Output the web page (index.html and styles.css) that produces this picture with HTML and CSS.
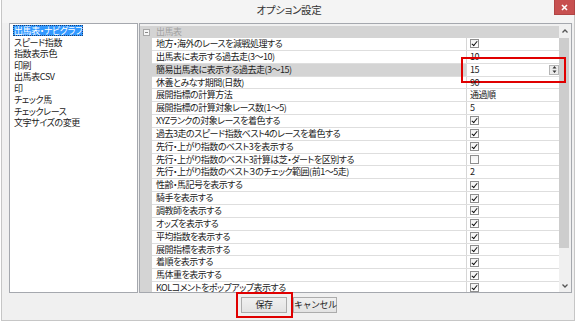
FILE: index.html
```html
<!DOCTYPE html>
<html lang="ja">
<head>
<meta charset="utf-8">
<title>オプション設定</title>
<link rel="stylesheet" href="styles.css">
</head>
<body>
<div class="window">
  <div class="titlebar">
    <span class="title">オプション設定</span>
    <button class="close" aria-label="閉じる">
      <svg width="7" height="7" viewBox="0 0 7 7"><path d="M1 1 L6 6 M6 1 L1 6" stroke="#fff" stroke-width="1.6" fill="none"/></svg>
    </button>
  </div>
  <div class="main">
    <ul class="list">
      <li><span class="sel">出馬表・ナビグラフ</span></li>
      <li>スピード指数</li>
      <li>指数表示色</li>
      <li>印刷</li>
      <li>出馬表CSV</li>
      <li>印</li>
      <li>チェック馬</li>
      <li>チェックレース</li>
      <li>文字サイズの変更</li>
    </ul>
    <div class="panel">
      <div class="tree">
        <div class="group">
          <span class="toggle"></span><span class="group-name">出馬表</span>
        </div>
        <div class="rows">
          <div class="row"><div class="label">地方・海外のレースを減戦処理する</div><div class="value"><span class="cb on"></span></div></div>
          <div class="row"><div class="label">出馬表に表示する過去走(3〜10)</div><div class="value">10</div></div>
          <div class="row selected"><div class="label">簡易出馬表に表示する過去走(3〜15)</div><div class="value edit">15<span class="spin"><svg width="7" height="9" viewBox="0 0 7 9"><path d="M3.5 1 L5.5 3.5 L1.5 3.5 Z M1.5 5.5 L5.5 5.5 L3.5 8 Z" fill="#333"/></svg></span><span class="mark mark-input"></span></div></div>
          <div class="row"><div class="label">休養とみなす期間(日数)</div><div class="value">90</div></div>
          <div class="row"><div class="label">展開指標の計算方法</div><div class="value">通過順</div></div>
          <div class="row"><div class="label">展開指標の計算対象レース数(1〜5)</div><div class="value">5</div></div>
          <div class="row"><div class="label">XYZランクの対象レースを着色する</div><div class="value"><span class="cb on"></span></div></div>
          <div class="row"><div class="label">過去3走のスピード指数ベスト4のレースを着色する</div><div class="value"><span class="cb on"></span></div></div>
          <div class="row"><div class="label">先行・上がり指数のベスト3を表示する</div><div class="value"><span class="cb on"></span></div></div>
          <div class="row"><div class="label">先行・上がり指数のベスト3計算は芝・ダートを区別する</div><div class="value"><span class="cb"></span></div></div>
          <div class="row"><div class="label">先行・上がり指数のベスト３のチェック範囲(前1〜5走)</div><div class="value">2</div></div>
          <div class="row"><div class="label">性齢・馬記号を表示する</div><div class="value"><span class="cb on"></span></div></div>
          <div class="row"><div class="label">騎手を表示する</div><div class="value"><span class="cb on"></span></div></div>
          <div class="row"><div class="label">調教師を表示する</div><div class="value"><span class="cb on"></span></div></div>
          <div class="row"><div class="label">オッズを表示する</div><div class="value"><span class="cb on"></span></div></div>
          <div class="row"><div class="label">平均指数を表示する</div><div class="value"><span class="cb on"></span></div></div>
          <div class="row"><div class="label">展開指標を表示する</div><div class="value"><span class="cb on"></span></div></div>
          <div class="row"><div class="label">着順を表示する</div><div class="value"><span class="cb on"></span></div></div>
          <div class="row"><div class="label">馬体重を表示する</div><div class="value"><span class="cb on"></span></div></div>
          <div class="row"><div class="label">KOLコメントをポップアップ表示する</div><div class="value"><span class="cb on"></span></div></div>
        </div>
      </div>
      <div class="scrollbar">
        <div class="sb-btn"><svg width="6" height="4" viewBox="0 0 6 4"><path d="M0.5 3.5 L3 1 L5.5 3.5" stroke="#555" stroke-width="1.3" fill="none"/></svg></div>
        <div class="sb-track"><div class="sb-thumb"></div></div>
        <div class="sb-btn"><svg width="6" height="4" viewBox="0 0 6 4"><path d="M0.5 0.5 L3 3 L5.5 0.5" stroke="#555" stroke-width="1.3" fill="none"/></svg></div>
      </div>
    </div>
  </div>
  <div class="footer">
    <button class="btn save">保存<span class="mark mark-btn"></span></button>
    <button class="btn cancel">キャンセル</button>
  </div>
</div>
</body>
</html>
```
FILE: styles.css
```css
* { box-sizing: border-box; }
html, body { margin: 0; padding: 0; background: #ffffff; }
body {
  font-family: "Noto Sans CJK JP", "Noto Sans", sans-serif;
  font-feature-settings: "palt";
  color: #222;
  width: 580px;
  height: 322px;
  overflow: hidden;
}
.window {
  margin-left: 1px;
  width: 574px;
  height: 321px;
  border: 1px solid #c6c6c6;
  border-top: none;
  background: #f0f0f0;
  display: flex;
  flex-direction: column;
}
.titlebar {
  height: 23px;
  flex: none;
  display: flex;
  align-items: flex-start;
  justify-content: center;
  position: relative;
  background: #f4f4f4;
}
.title {
  font-size: 10.5px;
  line-height: 20px;
  letter-spacing: -0.3px;
  color: #333;
  margin-left: 2px;
}
.close {
  position: absolute;
  right: -1px;
  top: 0;
  width: 21px;
  height: 15px;
  border: 1px solid #b04444;
  border-top: none;
  background: #c75050;
  padding: 0;
  display: flex;
  align-items: center;
  justify-content: center;
}
.main {
  display: flex;
  gap: 1px;
  padding: 0 2px 0 7px;
  height: 270px;
  flex: none;
}
.list {
  margin: 0;
  padding: 1px 0 0 1px;
  list-style: none;
  width: 129px;
  height: 270px;
  background: #fff;
  border: 1px solid #a5a8ae;
  font-size: 9px;
  letter-spacing: -0.4px;
}
.list li {
  height: 11.55px;
  line-height: 11.55px;
  padding-left: 3px;
  white-space: nowrap;
}
.list .sel {
  display: inline-block;
  margin-left: -1px;
  padding: 0 1px;
  background: #3399ff;
  color: #fff;
  outline: 1px dotted #1b3f73;
  outline-offset: -1px;
  line-height: 11px;
}
.panel {
  width: 433px;
  height: 270px;
  border: 1px solid #a5a8ae;
  background: #f0f0f0;
  display: flex;
  overflow: hidden;
}
.tree {
  width: 419px;
  flex: none;
  padding-top: 2px;
  background: #f0f0f0;
  font-size: 9px;
  letter-spacing: -0.5px;
}
.group {
  height: 12px;
  background: #d4d4d4;
  display: flex;
  align-items: center;
}
.toggle {
  width: 7px;
  height: 7px;
  margin-left: 3px;
  border: 1px solid #a7a7a7;
  background: #f6f6f6;
  position: relative;
}
.toggle::after {
  content: "";
  position: absolute;
  left: 1px;
  top: 2px;
  width: 3px;
  height: 1px;
  background: #8a8a8a;
}
.group-name {
  margin-left: 6px;
  color: #a2a2a2;
  line-height: 12px;
}
.rows {
  background: #d4d4d4;
  padding-left: 12px;
  height: 260px;
}
.row {
  height: 12.85px;
  display: grid;
  grid-template-columns: 1fr 92px;
  border-bottom: 1px solid #dedede;
  background: #fff;
  line-height: 11.85px;
}
.label {
  padding-left: 4px;
  border-right: 1px solid #d6d6d6;
  white-space: nowrap;
  overflow: hidden;
}
.row.selected .label { background: #d4d4d4; }
.value {
  padding-left: 3px;
  position: relative;
  display: flex;
  align-items: center;
  white-space: nowrap;
}
.value.edit { background: #fff; }
.spin {
  position: absolute;
  right: 0;
  top: 1px;
  width: 10px;
  height: 10px;
  border: 1px solid #b5b5b5;
  background: #ececec;
  display: flex;
  align-items: center;
  justify-content: center;
}
.cb {
  width: 9px;
  height: 9px;
  border: 1px solid #8e8e8e;
  background: linear-gradient(#f2f2f2, #ffffff);
  position: relative;
}
.cb.on::after {
  content: "";
  position: absolute;
  left: 2.2px;
  top: 0px;
  width: 2.4px;
  height: 5px;
  border-right: 1.7px solid #111;
  border-bottom: 1.7px solid #111;
  transform: rotate(40deg);
}
.scrollbar {
  width: 12px;
  flex: none;
  display: flex;
  flex-direction: column;
  background: #f0f0f0;
}
.sb-btn {
  height: 13px;
  flex: none;
  display: flex;
  align-items: center;
  justify-content: center;
  padding-right: 1px;
}
.sb-track { flex: 1; padding-top: 1px; }
.sb-thumb {
  width: 10px;
  height: 210px;
  background: #cdcdcd;
}
.footer {
  flex: 1;
  display: flex;
  justify-content: center;
  align-items: flex-start;
  gap: 6px;
  padding-top: 4px;
  padding-left: 2px;
}
.btn {
  height: 16px;
  padding: 0;
  border: 1px solid #acacac;
  background: linear-gradient(#f0f0f0, #e3e3e3);
  font-family: inherit;
  font-size: 9px;
  letter-spacing: -0.5px;
  color: #222;
  line-height: 14px;
  white-space: nowrap;
  position: relative;
}
.save { width: 46px; }
.cancel { width: 44px; }
.mark {
  position: absolute;
  border: 2px solid #e00000;
  pointer-events: none;
}
.mark-input { left: -6px; top: -7px; right: -7px; bottom: -7px; }
.mark-btn { left: -6px; top: -6px; right: -7px; bottom: -6px; }
```
